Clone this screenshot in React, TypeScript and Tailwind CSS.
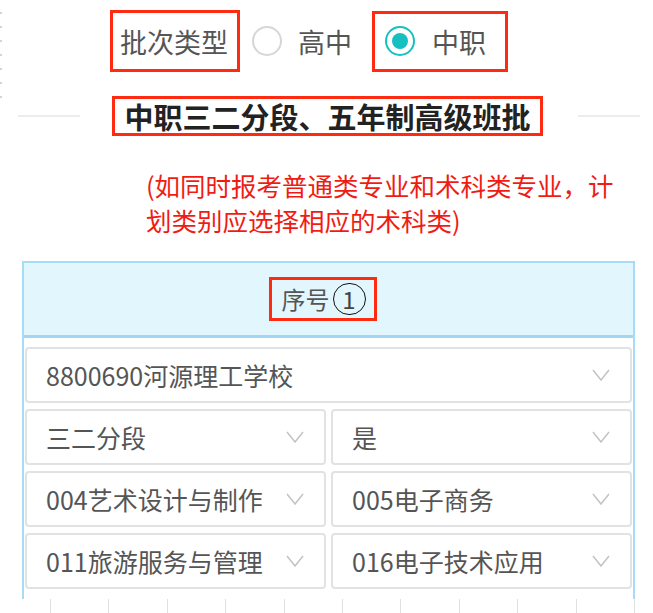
import { useState } from 'react';

const FONT = '"Noto Sans CJK SC", "Noto Sans", "Liberation Sans", sans-serif';

function Chevron() {
  return (
    <svg className="w-[18px] h-[12px] shrink-0" viewBox="0 0 18 12" fill="none" stroke="#c2c2c2" strokeWidth={1.5}>
      <path d="M1 1l8 10 8-10" />
    </svg>
  );
}

function SelectBox({ value }: { value: string }) {
  return (
    <div className="h-[56px] bg-white border-2 border-[#e2e2e2] rounded-[4px] flex items-center justify-between pl-[19px] pr-[20px]">
      <span className="text-[25px] text-[#555] leading-none whitespace-nowrap">{value}</span>
      <Chevron />
    </div>
  );
}

export default function App() {
  const [batch, setBatch] = useState<'gz' | 'zz'>('zz');

  return (
    <div className="relative w-[653px] h-[613px] overflow-hidden bg-white" style={{ fontFamily: FONT }}>
      {/* faint edge ticks */}
      <div className="absolute left-0 top-[12px] flex flex-col gap-[12px]">
        {[0, 1, 2, 3, 4, 5, 6].map((i) => (
          <div key={i} className="w-[2px] h-[2px] bg-[#d4d4d4]" />
        ))}
      </div>

      {/* Batch type */}
      <div className="flex items-center pt-[10px]">
        <div className="ml-[110px] w-[130px] h-[62px] border-[3px] border-[#ff2a12] flex items-center pl-[7px]">
          <span className="text-[27px] text-[#555] leading-none">批次类型</span>
        </div>
        <button onClick={() => setBatch('gz')} className="ml-[12px] flex items-center">
          <span className="w-[30px] h-[30px] rounded-full border-2 border-[#d6d6d6] flex items-center justify-center">
            {batch === 'gz' && <span className="w-[16px] h-[16px] rounded-full bg-[#17c0c0]" />}
          </span>
          <span className="ml-[16px] text-[27px] text-[#555] leading-none">高中</span>
        </button>
        <div className="ml-[20px] w-[136px] h-[61px] border-[3px] border-[#ff2a12] flex items-center pl-[10px]">
          <button onClick={() => setBatch('zz')} className="flex items-center">
            <span
              className={
                batch === 'zz'
                  ? 'w-[30px] h-[30px] rounded-full border-2 border-[#17c0c0] flex items-center justify-center'
                  : 'w-[30px] h-[30px] rounded-full border-2 border-[#d6d6d6] flex items-center justify-center'
              }
            >
              {batch === 'zz' && <span className="w-[16px] h-[16px] rounded-full bg-[#17c0c0]" />}
            </span>
            <span className="ml-[17px] text-[27px] text-[#555] leading-none">中职</span>
          </button>
        </div>
      </div>

      {/* Title with divider lines */}
      <div className="flex items-center mt-[24px] pl-[18px]">
        <div className="w-[62px] h-[2px] bg-[#ececec]" />
        <div className="ml-[32px] w-[431px] h-[40px] border-[3px] border-[#ff2a12] flex items-center justify-center">
          <span className="text-[29px] font-bold text-[#222] leading-none whitespace-nowrap">中职三二分段、五年制高级班批</span>
        </div>
        <div className="ml-[35px] w-[62px] h-[2px] bg-[#ececec]" />
      </div>

      {/* Note */}
      <p className="ml-[146px] mt-[31px] text-[25.5px] leading-[35px] text-[#f01c14] whitespace-nowrap">
        (如同时报考普通类专业和术科类专业，计
        <br />
        划类别应选择相应的术科类)
      </p>

      {/* Table */}
      <div className="ml-[22px] mt-[24px] w-[613px] border-2 border-b-0 border-[#a8dbf5]">
        <div className="h-[75px] bg-[#e2f6fd] border-b-[3px] border-[#a2d6f3] flex items-center justify-center pr-[12px]">
          <div className="w-[108px] h-[44px] border-[3px] border-[#ff2a12] flex items-center justify-center gap-[3px] pl-[2px]">
            <span className="text-[24px] text-[#555] leading-none">序号</span>
            <span className="w-[33px] h-[32px] rounded-full border-[1.5px] border-[#111] flex items-center justify-center text-[24px] text-[#444] leading-none">
              1
            </span>
          </div>
        </div>
        <div className="px-[1px] pt-[9px] pb-[10px] flex flex-col gap-[6px]">
          <SelectBox value="8800690河源理工学校" />
          <div className="grid grid-cols-2 gap-[5px]">
            <SelectBox value="三二分段" />
            <SelectBox value="是" />
          </div>
          <div className="grid grid-cols-2 gap-[5px]">
            <SelectBox value="004艺术设计与制作" />
            <SelectBox value="005电子商务" />
          </div>
          <div className="grid grid-cols-2 gap-[5px]">
            <SelectBox value="011旅游服务与管理" />
            <SelectBox value="016电子技术应用" />
          </div>
        </div>
      </div>
      <div className="flex ml-[50px]">
        {[0, 1, 2, 3, 4, 5, 6, 7, 8, 9, 10].map((i) => (
          <div key={i} className="w-[58.4px] h-[14px] border-l border-[#e0e0e0] shrink-0" />
        ))}
      </div>
    </div>
  );
}
